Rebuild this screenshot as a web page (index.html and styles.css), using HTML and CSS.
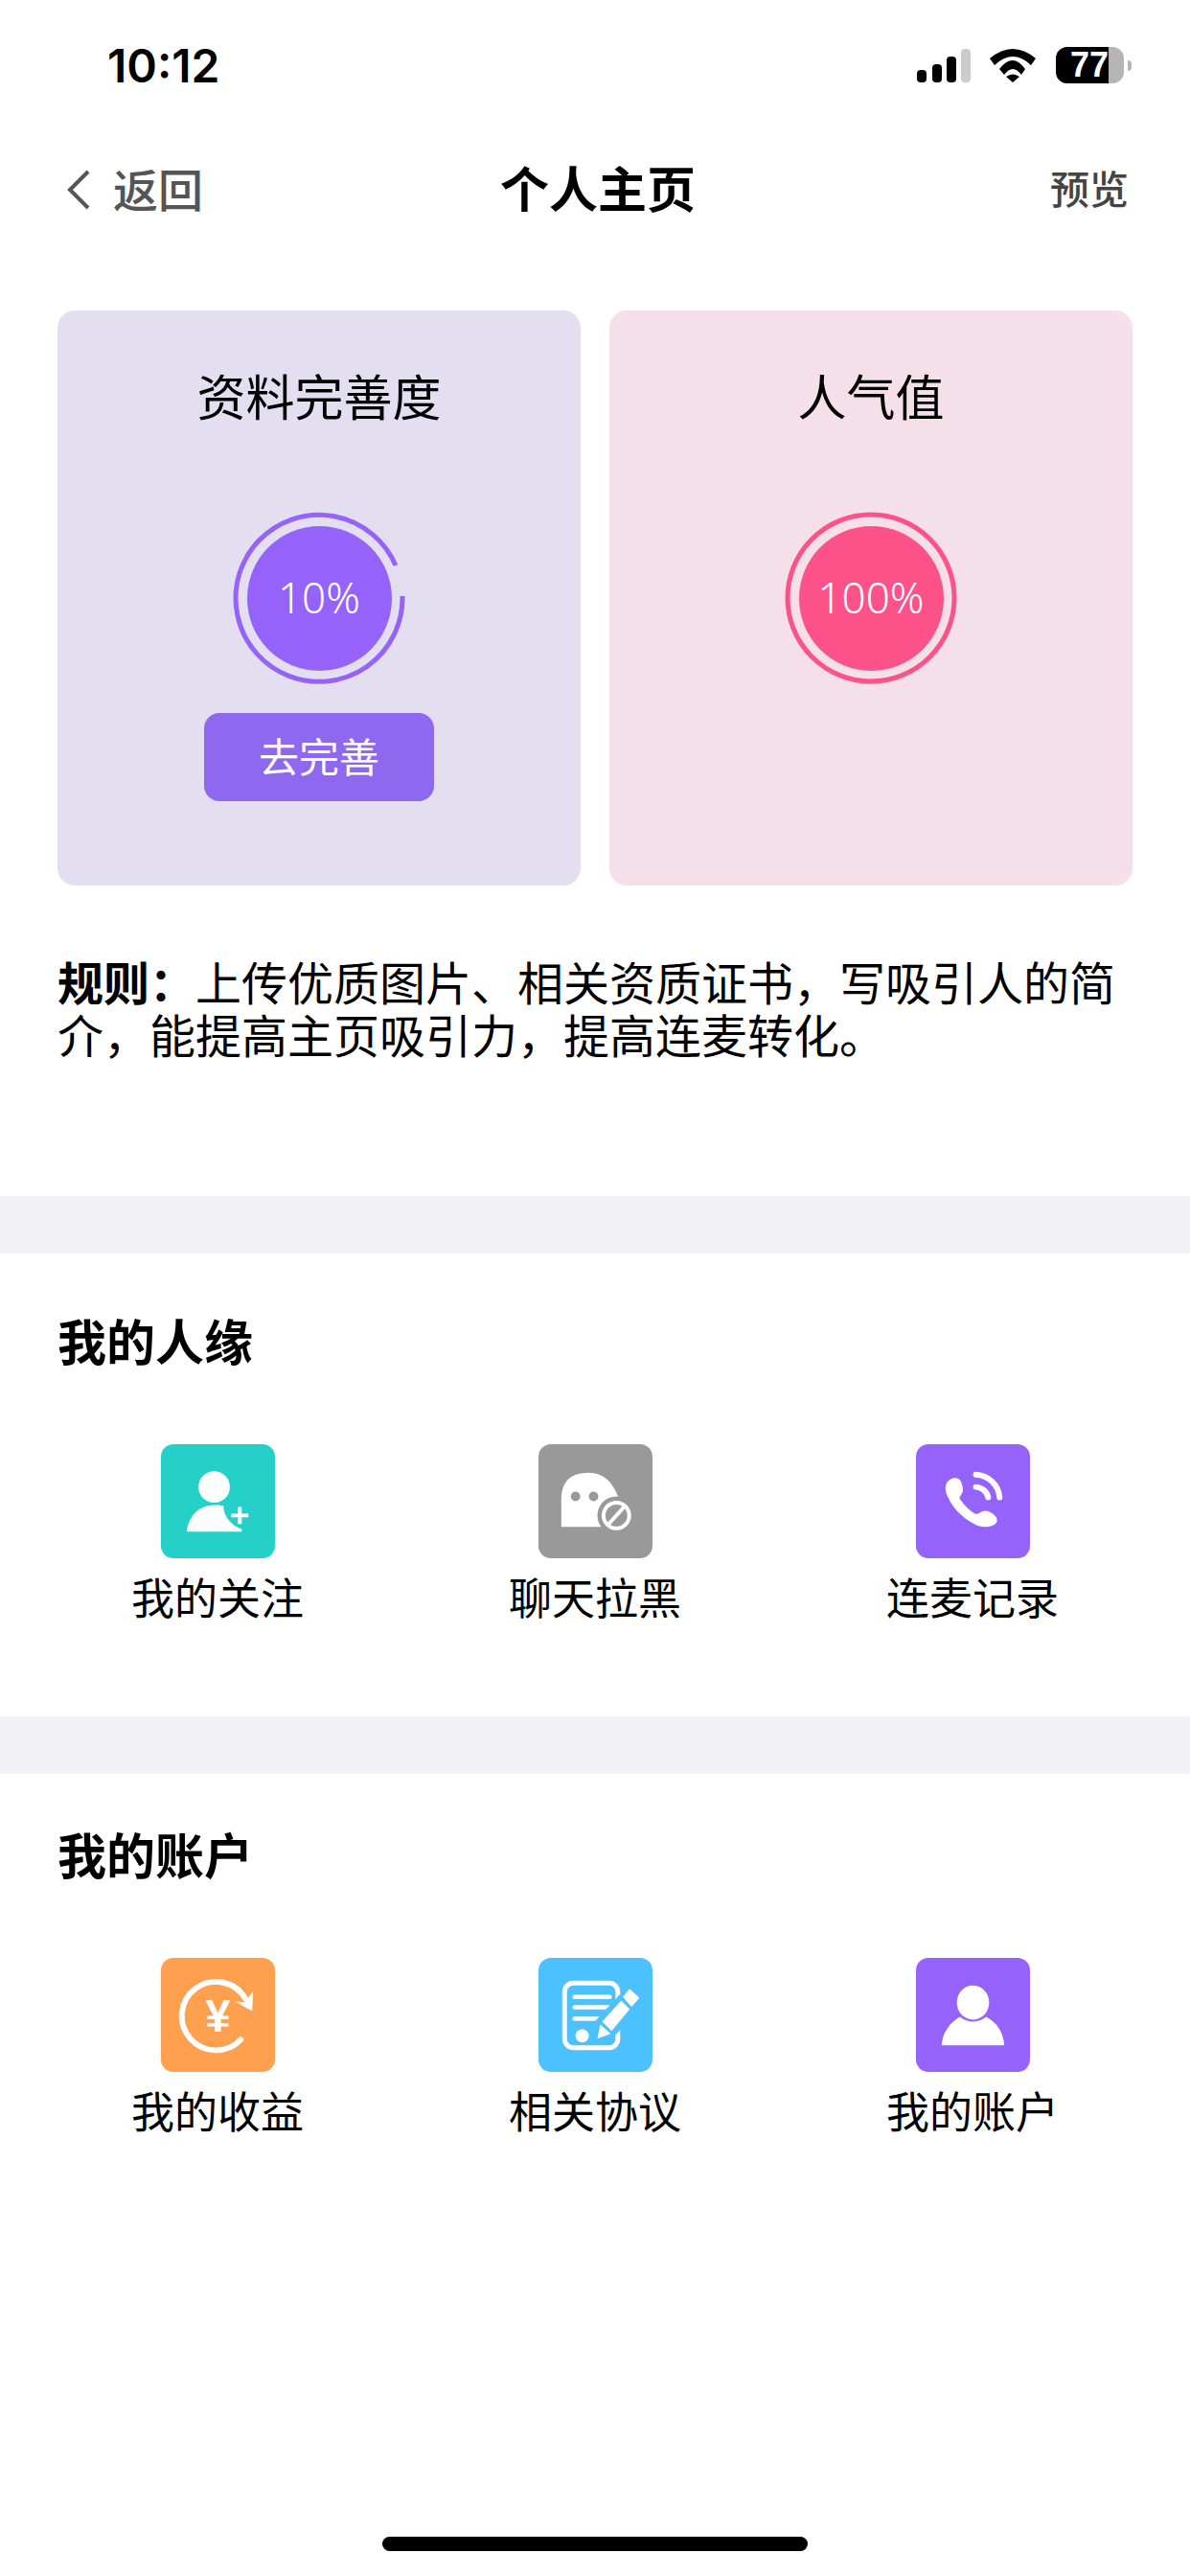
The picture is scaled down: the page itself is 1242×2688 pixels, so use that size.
FILE: index.html
```html
<!DOCTYPE html>
<html lang="zh-CN">
<head>
<meta charset="UTF-8">
<meta name="viewport" content="width=device-width, initial-scale=1.0">
<title>个人主页</title>
<link rel="stylesheet" href="styles.css">
</head>
<body>

<div class="status-bar">
    <span class="time">10:12</span>
    <div class="status-icons">
        <svg class="signal" width="56" height="35" viewBox="0 0 56 35">
            <rect x="0" y="22" width="10" height="13" rx="4" fill="#000"/>
            <rect x="16" y="16" width="10" height="19" rx="4" fill="#000"/>
            <rect x="31" y="8" width="10" height="27" rx="4" fill="#000"/>
            <rect x="46" y="0" width="10" height="35" rx="4" fill="#ccc"/>
        </svg>
        <svg class="wifi" width="48" height="35" viewBox="0 0 48 35">
            <path d="M0 10Q24 -10 48 10L43 17Q24 -1 5 17Z" fill="#000"/>
            <path d="M10 21Q24 3 37 21L33 27Q24 15 15 27Z" fill="#000"/>
            <path d="M17 29Q24 24 31 29L24 35Z" fill="#000"/>
        </svg>
        <div class="battery">
            <div class="battery-body"><div class="battery-fill">77</div></div>
            <div class="battery-nub"></div>
        </div>
    </div>
</div>

<div class="nav">
    <div class="nav-back">
        <svg width="24" height="42" viewBox="0 0 24 42">
            <path d="M22 2L3 21L22 40" fill="none" stroke="#555" stroke-width="4"/>
        </svg>
        <span>返回</span>
    </div>
    <div class="nav-title">个人主页</div>
    <div class="nav-preview">预览</div>
</div>

<div class="cards">
    <div class="card card-purple">
        <div class="card-title">资料完善度</div>
        <div class="ring">
            <svg width="180" height="180" viewBox="0 0 180 180">
                <path d="M177 88A87 87 0 1 1 170 56" fill="none" stroke="#9563f9" stroke-width="5"/>
            </svg>
            <div class="ring-value">10%</div>
        </div>
        <div class="card-button">去完善</div>
    </div>
    <div class="card card-pink">
        <div class="card-title">人气值</div>
        <div class="ring">
            <svg width="180" height="180" viewBox="0 0 180 180">
                <circle cx="90" cy="90" r="87" fill="none" stroke="#fc5289" stroke-width="5"/>
            </svg>
            <div class="ring-value">100%</div>
        </div>
    </div>
</div>

<p class="rule"><b>规则：</b>上传优质图片、相关资质证书，写吸引人的简介，能提高主页吸引力，提高连麦转化。</p>

<div class="band"></div>

<div class="section section-friends">
    <div class="section-title">我的人缘</div>
    <div class="tiles">
        <div class="tile-item">
            <div class="tile tile-teal">
                <svg viewBox="0 0 120 120">
                    <circle cx="56" cy="45" r="16.5" fill="#fff"/>
                    <path d="M27 92C29 75 41 64 56 64C60 64 63 64 66 65C65 73 73 86 85 89V92Z" fill="#fff"/>
                    <path d="M83 66V84M74 75H92" stroke="#fff" stroke-width="4" fill="none"/>
                </svg>
            </div>
            <div class="tile-label">我的关注</div>
        </div>
        <div class="tile-item">
            <div class="tile tile-gray">
                <svg viewBox="0 0 120 120">
                    <path d="M24 87V58Q24 30 53 30Q77 30 86 62V87Z" fill="#fff"/>
                    <circle cx="39" cy="55" r="5" fill="#999"/>
                    <circle cx="58" cy="55" r="5" fill="#999"/>
                    <circle cx="82" cy="75" r="20" fill="#999"/>
                    <circle cx="82" cy="75" r="13.5" fill="none" stroke="#fff" stroke-width="4"/>
                    <path d="M73 85L91 65" stroke="#fff" stroke-width="4"/>
                </svg>
            </div>
            <div class="tile-label">聊天拉黑</div>
        </div>
        <div class="tile-item">
            <div class="tile tile-purple">
                <svg viewBox="0 0 120 120">
                    <path d="M36 37C41 34 47 36 48 41C50 47 50 50 47 54C45 56 46 58 48 60C52 66 57 70 62 73C65 74 67 72 69 71C73 69 78 71 82 74C87 78 86 83 82 85C78 87 72 88 66 86C50 80 37 66 32 52C30 46 31 40 36 37Z" fill="#fff"/>
                    <path d="M63 32A26 26 0 0 1 88 56M63 45A14 14 0 0 1 76 56" fill="none" stroke="#fff" stroke-width="6" stroke-linecap="round"/>
                </svg>
            </div>
            <div class="tile-label">连麦记录</div>
        </div>
    </div>
</div>

<div class="band"></div>

<div class="section section-account">
    <div class="section-title">我的账户</div>
    <div class="tiles">
        <div class="tile-item">
            <div class="tile tile-orange">
                <svg viewBox="0 0 120 120">
                    <path d="M84 86A36 36 0 1 1 89 43" fill="none" stroke="#fff" stroke-width="6" stroke-linecap="round"/>
                    <path d="M97 35L96 56L78 46L88 47Z" fill="#fff"/>
                    <text class="yen" x="60" y="78" text-anchor="middle">¥</text>
                </svg>
            </div>
            <div class="tile-label">我的收益</div>
        </div>
        <div class="tile-item">
            <div class="tile tile-blue">
                <svg viewBox="0 0 120 120">
                    <rect x="27.500" y="26.500" width="56" height="68" rx="9" fill="none" stroke="#fff" stroke-width="5"/>
                    <path d="M38 41H75M38 52H75M38 64H66" stroke="#fff" stroke-width="4.500" stroke-linecap="round"/>
                    <circle cx="46" cy="82" r="7" fill="#fff"/>
                    <path d="M58 90L60 66L86 38L106 56L78 84Z" fill="#4dc1fd"/>
                    <path d="M62 85L65 70L76 80Z" fill="#fff"/>
                    <path d="M67 67L87 45L96 54L77 77Z" fill="#fff"/>
                    <path d="M90 41L96 34L105 42L98 50Z" fill="#fff" stroke="#fff" stroke-width="2" stroke-linejoin="round"/>
                </svg>
            </div>
            <div class="tile-label">相关协议</div>
        </div>
        <div class="tile-item">
            <div class="tile tile-purple">
                <svg viewBox="0 0 120 120">
                    <ellipse cx="60" cy="47" rx="17" ry="18" fill="#fff"/>
                    <path d="M27 92C28 78 36 68 46 62Q60 72 74 62C85 68 92 78 93 92Z" fill="#fff"/>
                </svg>
            </div>
            <div class="tile-label">我的账户</div>
        </div>
    </div>
</div>

<div class="home-bar"></div>

</body>
</html>
```

FILE: styles.css
```css
body {
    margin: 0;
    width: 1242px;
    height: 2688px;
    display: flex;
    flex-direction: column;
    background-color: #fff;
    color: #000;
    font-family: "Noto Sans CJK SC", "Noto Sans", sans-serif;
}

/* status bar */
.status-bar {
    height: 136px;
    flex: none;
    display: flex;
    align-items: center;
    justify-content: space-between;
    padding: 0 61px 0 112px;
}
.time {
    font-family: Inter, "Liberation Sans", sans-serif;
    font-size: 48px;
    font-weight: 600;
}
.status-icons {
    display: flex;
    align-items: center;
}
.wifi {
    margin-left: 20px;
}
.battery {
    display: flex;
    align-items: center;
    margin-left: 21px;
}
.battery-body {
    width: 71px;
    height: 38px;
    border-radius: 12px;
    background-color: #b5b5b5;
}
.battery-fill {
    width: 55px;
    height: 38px;
    border-radius: 12px 0 0 12px;
    background-color: #000;
    color: #fff;
    font-family: "Liberation Sans", sans-serif;
    font-size: 36px;
    font-weight: bold;
    line-height: 38px;
    text-align: right;
}
.battery-nub {
    width: 4px;
    height: 11px;
    margin-left: 4px;
    border-radius: 0 4px 4px 0;
    background-color: #b5b5b5;
}

/* nav */
.nav {
    height: 124px;
    flex: none;
    box-sizing: border-box;
    display: grid;
    grid-template-columns: 1fr auto 1fr;
    align-items: center;
    padding: 0 64px 6px 70px;
}
.nav-back {
    display: flex;
    align-items: center;
    gap: 24px;
    color: #555;
    font-size: 47px;
    font-weight: 500;
}
.nav-back svg {
    margin-top: 6px;
}
.nav-title {
    font-size: 51px;
    font-weight: 700;
}
.nav-preview {
    justify-self: end;
    color: #444;
    font-size: 41px;
    font-weight: 500;
}

/* cards */
.cards {
    flex: none;
    display: flex;
    gap: 30px;
    padding: 64px 60px 0;
}
.card {
    width: 546px;
    height: 600px;
    border-radius: 18px;
    display: flex;
    flex-direction: column;
    align-items: center;
}
.card-purple {
    background-color: #e3dff1;
    --accent: #9563f9;
}
.card-pink {
    background-color: #f5dfe8;
    --accent: #fc5289;
}
.card-title {
    margin-top: 58px;
    margin-bottom: 3px;
    font-size: 51px;
    line-height: 60px;
}
.ring {
    width: 180px;
    height: 180px;
    margin-top: 89px;
    display: grid;
    place-items: center;
}
.ring svg, .ring-value {
    grid-area: 1 / 1;
}
.ring-value {
    width: 151px;
    height: 151px;
    border-radius: 50%;
    background-color: var(--accent);
    color: #fff;
    font-family: "Noto Sans", sans-serif;
    font-size: 44px;
    font-weight: 300;
    line-height: 149px;
    text-align: center;
}
.card-button {
    width: 240px;
    height: 92px;
    margin-top: 30px;
    border-radius: 16px;
    background-color: #8e68ee;
    color: #fff;
    font-size: 42px;
    line-height: 88px;
    text-align: center;
}

/* rule text */
.rule {
    flex: none;
    height: 324px;
    margin: 0;
    padding: 72px 60px 0;
    box-sizing: border-box;
    font-size: 48px;
    line-height: 55px;
}
.rule b {
    font-weight: 700;
}

.band {
    height: 60px;
    flex: none;
    background-color: #f1f1f6;
}

/* sections */
.section {
    flex: none;
    padding: 0 30px;
    box-sizing: border-box;
}
.section-friends {
    height: 483px;
    padding-top: 60px;
}
.section-account {
    padding-top: 53px;
}
.section-title {
    padding-left: 30px;
    font-size: 51px;
    font-weight: 700;
    line-height: 60px;
}
.tiles {
    display: grid;
    grid-template-columns: repeat(3, 394px);
    margin-top: 79px;
}
.tile-item {
    display: flex;
    flex-direction: column;
    align-items: center;
}
.tile {
    width: 119px;
    height: 119px;
    border-radius: 13px;
}
.tile svg {
    display: block;
    width: 100%;
    height: 100%;
}
.tile-teal { background-color: #25d0c9; }
.tile-gray { background-color: #999; }
.tile-purple { background-color: #9563f9; }
.tile-orange { background-color: #ffa04f; }
.tile-blue { background-color: #4dc1fd; }
.yen {
    fill: #fff;
    font-family: "Liberation Sans", sans-serif;
    font-size: 48px;
    font-weight: bold;
}
.tile-label {
    margin-top: 10px;
    font-size: 45px;
    line-height: 60px;
}

.home-bar {
    width: 444px;
    height: 15px;
    flex: none;
    margin: auto auto 26px;
    border-radius: 8px;
    background-color: #000;
}
```
